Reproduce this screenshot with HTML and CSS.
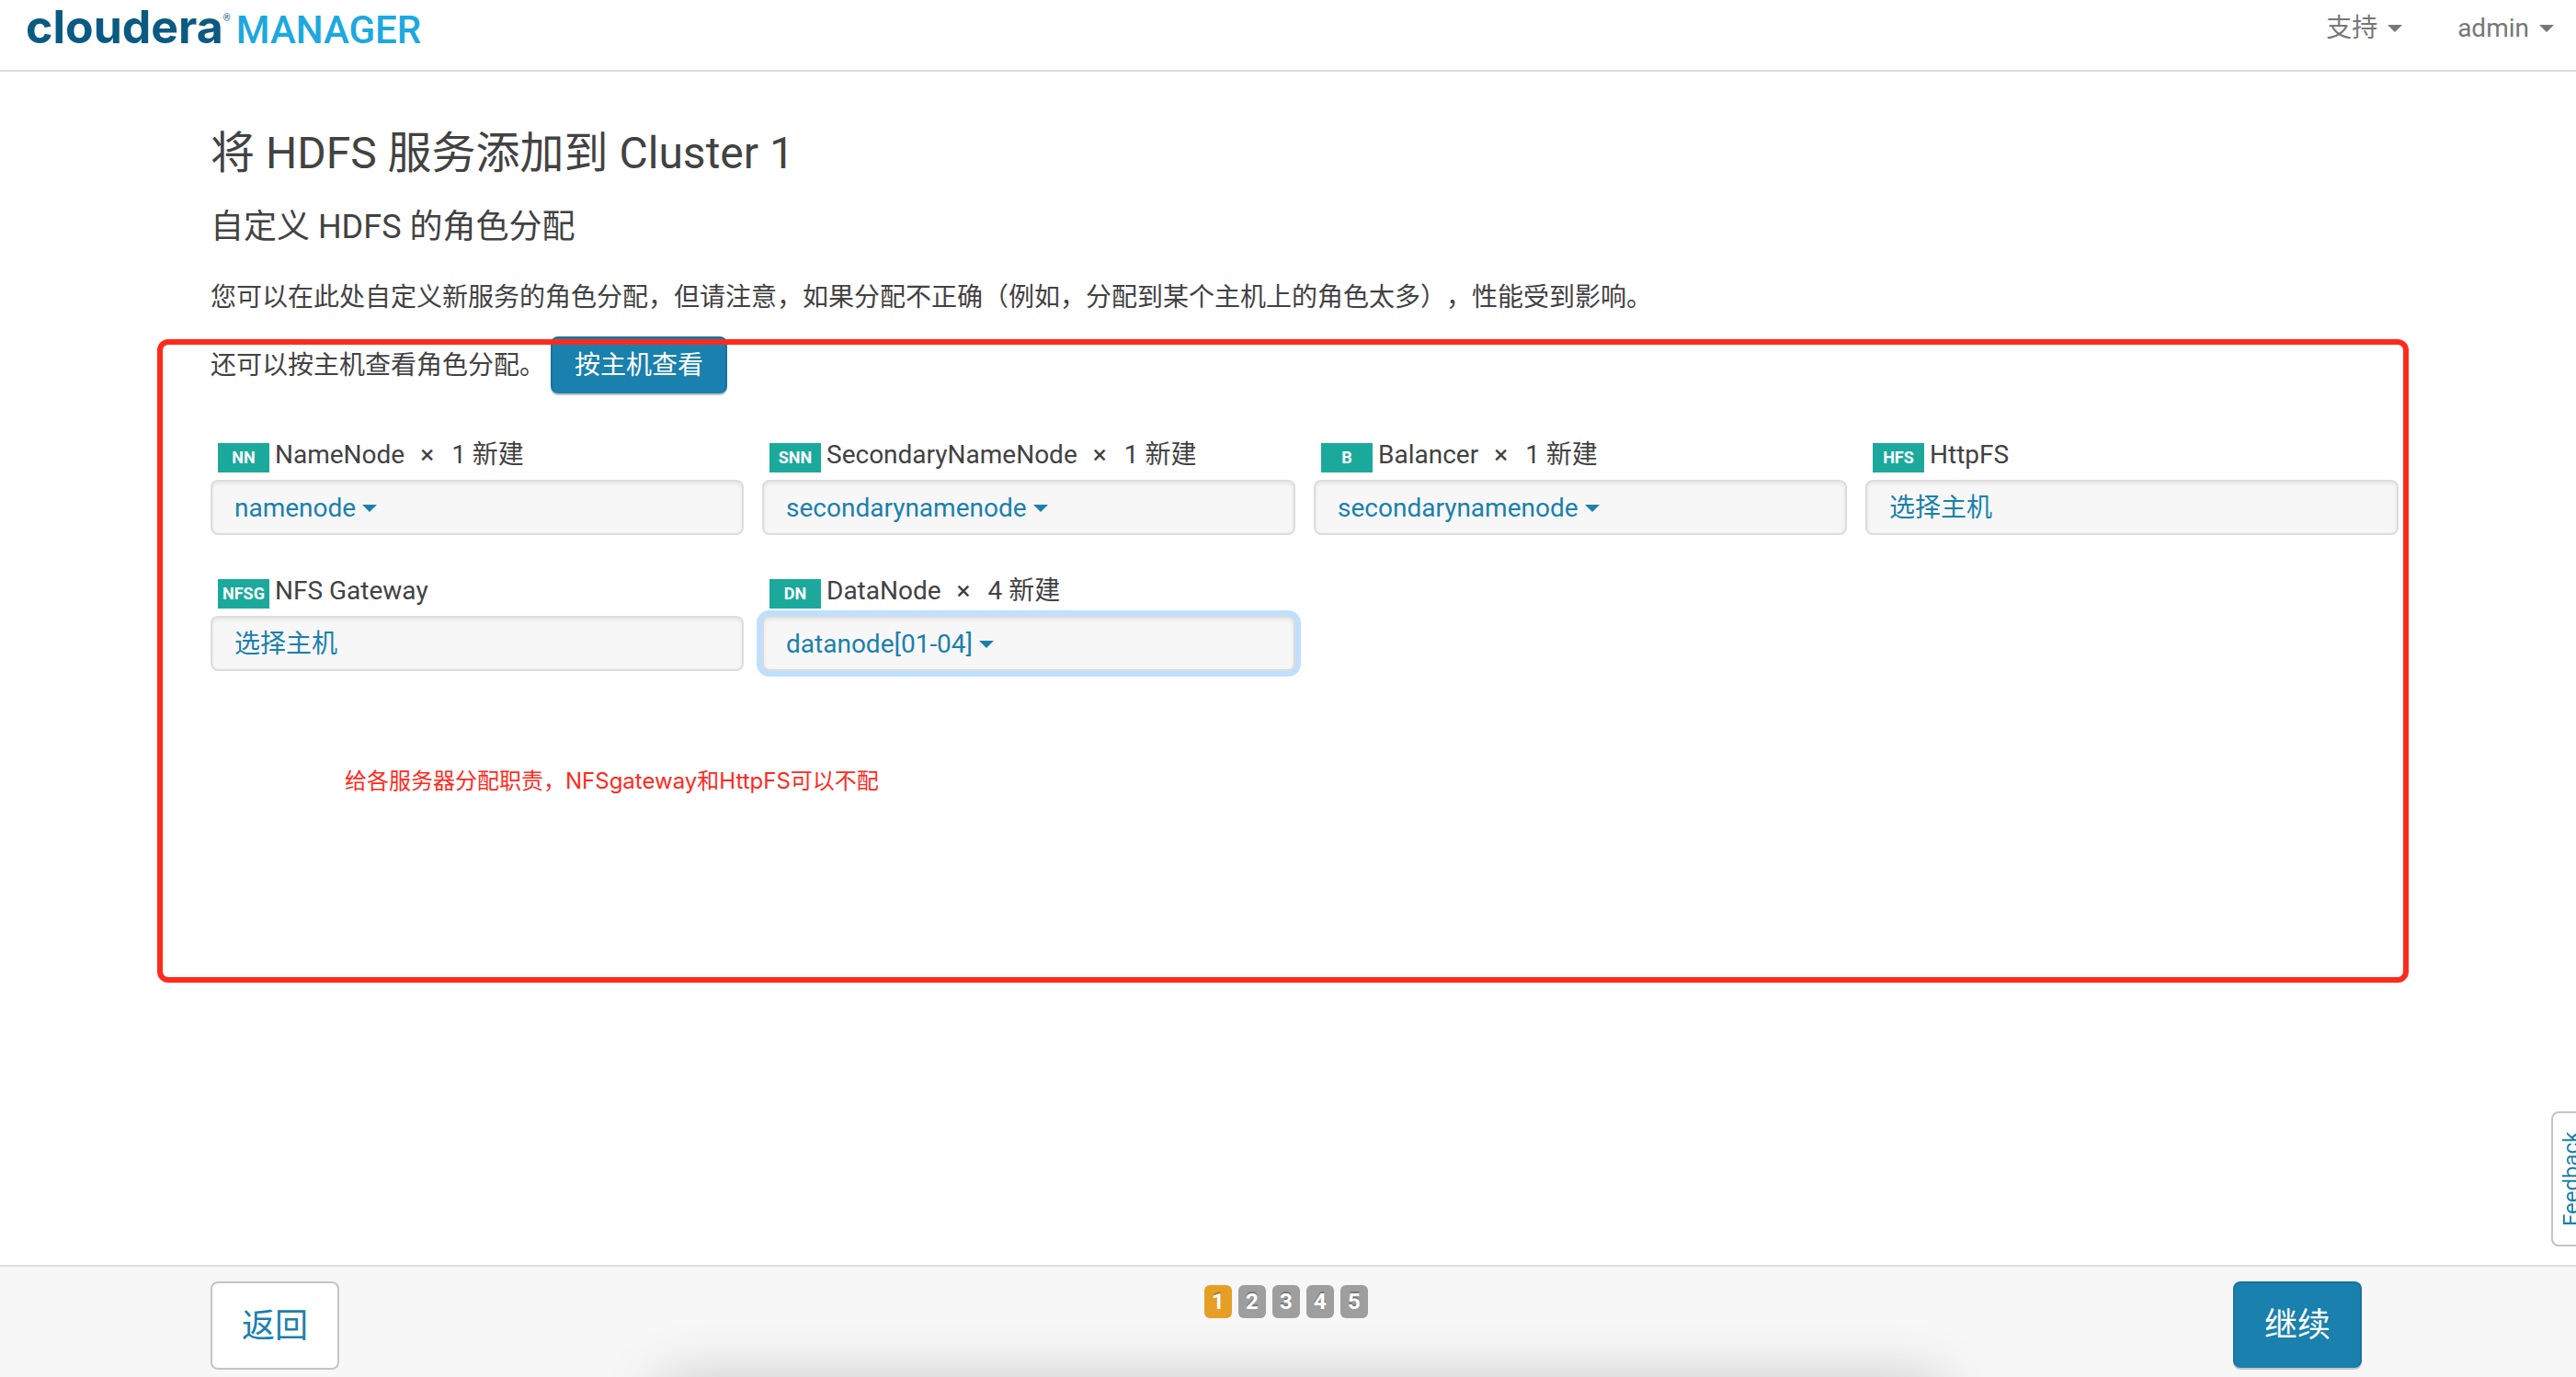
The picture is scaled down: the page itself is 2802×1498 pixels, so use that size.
FILE: index.html
```html
<!DOCTYPE html>
<html lang="zh-CN">
<head>
<meta charset="utf-8">
<meta name="viewport" content="width=device-width, initial-scale=1">
<title>Cloudera Manager</title>
<link rel="stylesheet" href="styles.css">
</head>
<body>
<header class="topbar">
  <a class="brand" href="#"><span class="brand-name">cloudera</span><span class="brand-mark">®</span><span class="brand-product">MANAGER</span></a>
  <nav class="topnav">
    <a class="topnav-link" href="#">支持<span class="caret"></span></a>
    <a class="topnav-link" href="#">admin<span class="caret"></span></a>
  </nav>
</header>

<main class="page">
  <div class="container">
    <h1 class="title">将 HDFS 服务添加到 Cluster 1</h1>
    <h2 class="subtitle">自定义 HDFS 的角色分配</h2>
    <p class="intro">您可以在此处自定义新服务的角色分配，但请注意，如果分配不正确（例如，分配到某个主机上的角色太多），性能受到影响。</p>

    <section class="assign">
      <div class="view-by">
        <p class="view-by-text">还可以按主机查看角色分配。</p>
        <button class="btn btn-primary" type="button">按主机查看</button>
      </div>

      <div class="roles">
        <div class="role">
          <label class="role-label" for="role-nn"><span class="badge">NN</span><span class="role-name">NameNode</span><span class="times">×</span><span>1 新建</span></label>
          <button class="hosts" id="role-nn" type="button">namenode<span class="caret"></span></button>
        </div>
        <div class="role">
          <label class="role-label" for="role-snn"><span class="badge">SNN</span><span class="role-name">SecondaryNameNode</span><span class="times">×</span><span>1 新建</span></label>
          <button class="hosts" id="role-snn" type="button">secondarynamenode<span class="caret"></span></button>
        </div>
        <div class="role">
          <label class="role-label" for="role-b"><span class="badge">B</span><span class="role-name">Balancer</span><span class="times">×</span><span>1 新建</span></label>
          <button class="hosts" id="role-b" type="button">secondarynamenode<span class="caret"></span></button>
        </div>
        <div class="role">
          <label class="role-label" for="role-hfs"><span class="badge">HFS</span><span class="role-name">HttpFS</span></label>
          <button class="hosts" id="role-hfs" type="button">选择主机</button>
        </div>
        <div class="role">
          <label class="role-label" for="role-nfsg"><span class="badge">NFSG</span><span class="role-name">NFS Gateway</span></label>
          <button class="hosts" id="role-nfsg" type="button">选择主机</button>
        </div>
        <div class="role">
          <label class="role-label" for="role-dn"><span class="badge">DN</span><span class="role-name">DataNode</span><span class="times">×</span><span>4 新建</span></label>
          <button class="hosts hosts-active" id="role-dn" type="button">datanode[01-04]<span class="caret"></span></button>
        </div>
      </div>

      <p class="note">给各服务器分配职责，NFSgateway和HttpFS可以不配</p>
      <div class="outline"></div>
    </section>
  </div>
</main>

<button class="feedback" type="button">Feedback</button>

<footer class="footer">
  <div class="container footer-row">
    <button class="btn btn-large" type="button">返回</button>
    <ol class="steps">
      <li class="step step-current">1</li>
      <li class="step">2</li>
      <li class="step">3</li>
      <li class="step">4</li>
      <li class="step">5</li>
    </ol>
    <button class="btn btn-large btn-primary" type="button">继续</button>
  </div>
  <div class="dock-shadow"></div>
</footer>
</body>
</html>
```
FILE: styles.css
```css
* {
  box-sizing: border-box;
}

body {
  margin: 0;
  min-height: 100vh;
  display: flex;
  flex-direction: column;
  overflow-x: hidden;
  background: #fff;
  color: #424242;
  font-family: Roboto, "Noto Sans CJK SC", sans-serif;
  font-size: 28px;
  line-height: 40px;
  text-spacing-trim: space-all;
}

h1, h2, p, ol {
  margin: 0;
  padding: 0;
  font-weight: 400;
}

button {
  font: inherit;
  cursor: pointer;
}

a {
  color: inherit;
  text-decoration: none;
}

/* Top bar */
.topbar {
  display: flex;
  justify-content: space-between;
  align-items: flex-start;
  height: 78px;
  padding: 0 24px 0 28px;
  border-bottom: 2px solid #ddd;
}

.brand {
  display: flex;
  align-items: baseline;
  line-height: 58px;
}

.brand-name {
  color: #0b5a82;
  font-family: Inter, sans-serif;
  font-size: 50px;
  font-weight: 700;
}

.brand-mark {
  align-self: flex-start;
  width: 14px;
  color: #0b5a82;
  font-size: 10px;
  line-height: 40px;
}

.brand-product {
  color: #1ca8e0;
  font-size: 42px;
  font-weight: 500;
}

.topnav {
  display: flex;
  gap: 60px;
  padding-top: 11px;
  color: #777;
}

.topnav-link {
  display: flex;
  align-items: center;
  gap: 11px;
}

.caret {
  border: 8px solid transparent;
  border-top-color: currentColor;
  border-bottom: 0;
}

/* Page body */
.page {
  flex: 1;
  padding: 59px 4px 40px 0;
}

.container {
  width: 100%;
  max-width: 2340px;
  margin: 0 auto;
}

.title {
  font-size: 48px;
  line-height: 60px;
}

.subtitle {
  margin-top: 30px;
  font-size: 36px;
}

.intro {
  margin-top: 37px;
}

.assign {
  position: relative;
  margin-top: 22px;
  padding-bottom: 199px;
}

.view-by {
  display: flex;
  align-items: center;
  gap: 6px;
}

.view-by-text {
  padding-top: 2px;
}

.btn {
  height: 62px;
  padding: 2px 24px 0;
  border: 2px solid #c4c4c4;
  border-radius: 8px;
  background: #fff;
  color: #1a80ad;
}

.btn-primary {
  border-color: #1673a0;
  border-bottom-color: #1a80ad;
  background: #1a80ad;
  box-shadow: 0 2px 0 #c4c4c4;
  color: #fff;
}

.btn-large {
  height: 96px;
  padding: 2px 32px 0;
  font-size: 36px;
}

.btn-large.btn-primary {
  height: 94px;
}

/* Role grid, one gutter wider than the container */
.roles {
  display: grid;
  grid-template-columns: repeat(4, 1fr);
  gap: 40px 20px;
  margin: 46px -40px 0 0;
}

.role-label {
  display: flex;
  align-items: flex-end;
  height: 40px;
  padding-left: 8px;
  line-height: 38px;
}

.badge {
  width: 56px;
  margin-right: 6px;
  background: #1ba99c;
  color: #fff;
  font-size: 18px;
  font-weight: 700;
  line-height: 32px;
  text-align: center;
}

.times {
  margin: 0 19px 0 17px;
}

.hosts {
  display: flex;
  align-items: center;
  gap: 7px;
  width: 100%;
  height: 60px;
  margin-top: 8px;
  padding: 2px 24px 0;
  border: 2px solid #dcdcdc;
  border-radius: 8px;
  background: #f7f7f7;
  box-shadow: inset 0 2px 4px rgba(0, 0, 0, 0.08);
  color: #1a80ad;
}

.hosts-active {
  box-shadow: inset 0 2px 4px rgba(0, 0, 0, 0.08), 0 0 0 6px #bfdfff;
}

.note {
  margin-top: 100px;
  padding-left: 146px;
  color: #ff2a1c;
  font-family: Inter, "Noto Sans CJK SC", sans-serif;
  font-size: 24px;
}

.outline {
  position: absolute;
  inset: 3px -51px 0 -58px;
  border: 6px solid #ff2a1c;
  border-radius: 12px;
  pointer-events: none;
}

/* Side tab, tucked past the right edge */
.feedback {
  position: fixed;
  right: -18px;
  bottom: 142px;
  height: 147px;
  width: 45px;
  padding: 0;
  border: 2px solid #c4c4c4;
  border-radius: 0 8px 8px 0;
  background: #fff;
  color: #1a80ad;
  font-size: 24px;
  writing-mode: vertical-rl;
  transform: rotate(180deg);
}

/* Footer */
.footer {
  position: relative;
  overflow: hidden;
  height: 122px;
  padding: 16px 4px 0 0;
  border-top: 2px solid #ddd;
  background: #f7f7f7;
}

.footer-row {
  display: flex;
  justify-content: space-between;
  align-items: flex-start;
}

.steps {
  display: flex;
  gap: 7px;
  margin-top: 4px;
  list-style: none;
}

.step {
  width: 30px;
  border-radius: 6px;
  background: #9e9e9e;
  color: #fff;
  font-size: 24px;
  font-weight: 700;
  line-height: 36px;
  text-align: center;
  text-shadow: 0 -2px 0 rgba(0, 0, 0, 0.25);
}

.step-current {
  background: #e69f25;
}

.dock-shadow {
  position: absolute;
  top: 100%;
  left: 26%;
  right: 25%;
  height: 40px;
  box-shadow: 0 16px 64px 12px rgba(0, 0, 0, 0.2);
  pointer-events: none;
}
```
